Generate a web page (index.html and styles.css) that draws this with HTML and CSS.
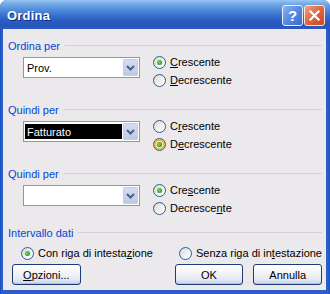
FILE: index.html
```html
<!DOCTYPE html>
<html lang="it">
<head>
<meta charset="utf-8">
<title>Ordina</title>
<link rel="stylesheet" href="styles.css">
</head>
<body>
<div class="window">
  <div class="titlebar">
    <span class="title">Ordina</span>
    <div class="tbtns">
      <span class="tbtn help">?</span>
      <span class="tbtn close"><svg width="19" height="19" viewBox="0 0 19 19"><path d="M5.5 5.5 L13.5 13.5 M13.5 5.5 L5.5 13.5" stroke="#fff" stroke-width="2.2" stroke-linecap="square"/></svg></span>
    </div>
  </div>
  <div class="client">
    <section class="group">
      <div class="ghead"><span>Ordina per</span></div>
      <div class="gbody">
        <div class="combo"><span class="cval">Prov.</span><span class="carrow"><svg width="9" height="6" viewBox="0 0 9 6"><path d="M1 1 L4.5 4.5 L8 1" fill="none" stroke="#4D6185" stroke-width="2"/></svg></span></div>
        <div class="radios">
          <div class="radio"><span class="rb on"></span><span><u>C</u>rescente</span></div>
          <div class="radio"><span class="rb"></span><span><u>D</u>ecrescente</span></div>
        </div>
      </div>
    </section>
    <section class="group next">
      <div class="ghead"><span>Quindi per</span></div>
      <div class="gbody">
        <div class="combo"><span class="cval sel">Fatturato</span><span class="carrow"><svg width="9" height="6" viewBox="0 0 9 6"><path d="M1 1 L4.5 4.5 L8 1" fill="none" stroke="#4D6185" stroke-width="2"/></svg></span></div>
        <div class="radios">
          <div class="radio"><span class="rb"></span><span>C<u>r</u>escente</span></div>
          <div class="radio"><span class="rb on hot"></span><span>D<u>e</u>crescente</span></div>
        </div>
      </div>
    </section>
    <section class="group next">
      <div class="ghead"><span>Quindi per</span></div>
      <div class="gbody">
        <div class="combo"><span class="cval"></span><span class="carrow"><svg width="9" height="6" viewBox="0 0 9 6"><path d="M1 1 L4.5 4.5 L8 1" fill="none" stroke="#4D6185" stroke-width="2"/></svg></span></div>
        <div class="radios">
          <div class="radio"><span class="rb on"></span><span>Cre<u>s</u>cente</span></div>
          <div class="radio"><span class="rb"></span><span>Decresce<u>n</u>te</span></div>
        </div>
      </div>
    </section>
    <section class="group last">
      <div class="ghead"><span>Intervallo dati</span></div>
      <div class="rangerow">
        <div class="radio r1"><span class="rb on"></span><span>Con riga di intesta<u>z</u>ione</span></div>
        <div class="radio"><span class="rb"></span><span>Senza riga di in<u>t</u>estazione</span></div>
      </div>
    </section>
    <div class="buttons">
      <span class="btn opz"><u>O</u>pzioni...</span>
      <span class="btn ok">OK</span>
      <span class="btn cancel">Annulla</span>
    </div>
  </div>
</div>
</body>
</html>
```

FILE: styles.css
```css
html, body {
  margin: 0;
  padding: 0;
}
body {
  width: 330px;
  height: 294px;
  overflow: hidden;
  background: #ffffff;
  font-family: "Liberation Sans", Arial, sans-serif;
  font-size: 11px;
  color: #000;
}
.window {
  width: 330px;
  height: 294px;
  box-sizing: border-box;
  display: flex;
  flex-direction: column;
  background: linear-gradient(90deg, #1C4FBF 0, #2A5EC9 2px, #2A5EC9 calc(100% - 2px), #1C4FBF 100%);
  border-radius: 7px 7px 0 0;
}
.titlebar {
  height: 29px;
  flex: none;
  display: flex;
  align-items: center;
  justify-content: space-between;
  padding: 0 5px 0 7px;
  border-radius: 7px 7px 0 0;
  background: linear-gradient(180deg, #9CC7F2 0, #78AEEA 3px, #5B95DE 8px, #3E77D2 14px, #2C5FC4 20px, #2654BB 25px, #2B5BC2 29px);
}
.title {
  color: #fff;
  font-weight: bold;
  font-size: 13px;
  letter-spacing: 0.2px;
  text-shadow: 1px 1px 0 #0E2A6A;
  margin-top: 1px;
}
.tbtns {
  display: flex;
  gap: 1px;
  margin-top: 1px;
}
.tbtn {
  width: 21px;
  height: 21px;
  box-sizing: border-box;
  border: 1px solid #fff;
  border-radius: 3px;
  display: flex;
  align-items: center;
  justify-content: center;
  color: #fff;
}
.help {
  background: linear-gradient(135deg, #8DB6F0 0, #5C8CE2 45%, #3A6AD0 100%);
  font-weight: bold;
  font-size: 15px;
  font-family: "Liberation Sans", Arial, sans-serif;
  border-color: #E6EEFB;
}
.close {
  background: linear-gradient(135deg, #F0A48A 0, #E06A45 45%, #C9451F 100%);
  border-color: #F6E3DA;
}
.close svg { display: block; }

.client {
  flex: 1;
  margin: 0 4px 4px 3px;
  background: #ECE9EC;
  display: flex;
  flex-direction: column;
  padding: 10px 4px 0 5px;
  box-sizing: border-box;
}
.group.next { margin-top: 14px; }
.group.last { margin-top: 9px; }
.ghead {
  height: 13px;
  display: flex;
  align-items: center;
  gap: 5px;
  color: #0046D5;
}
.ghead::after {
  content: "";
  flex: 1;
  height: 1px;
  background: #D3D1D6;
}
.gbody {
  margin-top: 1px;
  display: flex;
  align-items: flex-start;
  padding-left: 15px;
}
.combo {
  margin-top: 4px;
  width: 117px;
  height: 21px;
  box-sizing: border-box;
  border: 1px solid #7F9DB9;
  background: #fff;
  display: flex;
  align-items: center;
}
.cval {
  flex: 1;
  height: 15px;
  margin: 0 1px 0 1px;
  padding-left: 2px;
  display: flex;
  align-items: center;
  font-size: 11px;
}
.cval.sel {
  background: #000;
  color: #fff;
}
.carrow {
  width: 15px;
  height: 17px;
  box-sizing: border-box;
  margin-right: 1px;
  border: 1px solid #C2CFE6;
  border-radius: 1px;
  background: linear-gradient(180deg, #D3DEF2 0, #BCCBE6 100%);
  display: flex;
  align-items: center;
  justify-content: center;
}
.carrow svg { display: block; }
.radios {
  margin-left: 13px;
  display: flex;
  flex-direction: column;
}
.radio {
  height: 18px;
  display: flex;
  align-items: center;
  gap: 4px;
  white-space: nowrap;
}
.rb {
  width: 13px;
  height: 13px;
  flex: none;
  box-sizing: border-box;
  border: 1px solid #2A5D92;
  border-radius: 50%;
  background: linear-gradient(135deg, #D6D4D2 0, #F2F2F0 55%, #FFFFFF 100%);
  position: relative;
}
.rb.on::after {
  content: "";
  position: absolute;
  left: 3px;
  top: 3px;
  width: 5px;
  height: 5px;
  border-radius: 50%;
  background: radial-gradient(circle at 40% 40%, #6FE06A 0, #2CAA2A 60%, #1E8C1E 100%);
}
.rb.hot {
  box-shadow: inset 0 0 0 2px #F7B446;
  background: #FCE4B8;
}
.rangerow {
  margin-top: 5px;
  display: flex;
  padding-left: 13px;
}
.r1 { width: 158px; }
.buttons {
  margin-top: 2px;
  display: flex;
}
.btn {
  width: 69px;
  height: 21px;
  box-sizing: border-box;
  border: 1px solid #1B3C78;
  border-radius: 3px;
  display: flex;
  align-items: center;
  justify-content: center;
  background: linear-gradient(180deg, #FFFFFF 0, #F6F6F8 35%, #E4E8F2 75%, #C9D4EC 100%);
  box-shadow: inset 0 -1px 0 #AFC0E6, inset 0 1px 0 #FFFFFF;
}
.opz { margin-left: 4px; }
.ok { margin-left: 94px; }
.cancel { margin-left: 10px; }
u { text-decoration: underline; text-underline-offset: 1px; }
```
